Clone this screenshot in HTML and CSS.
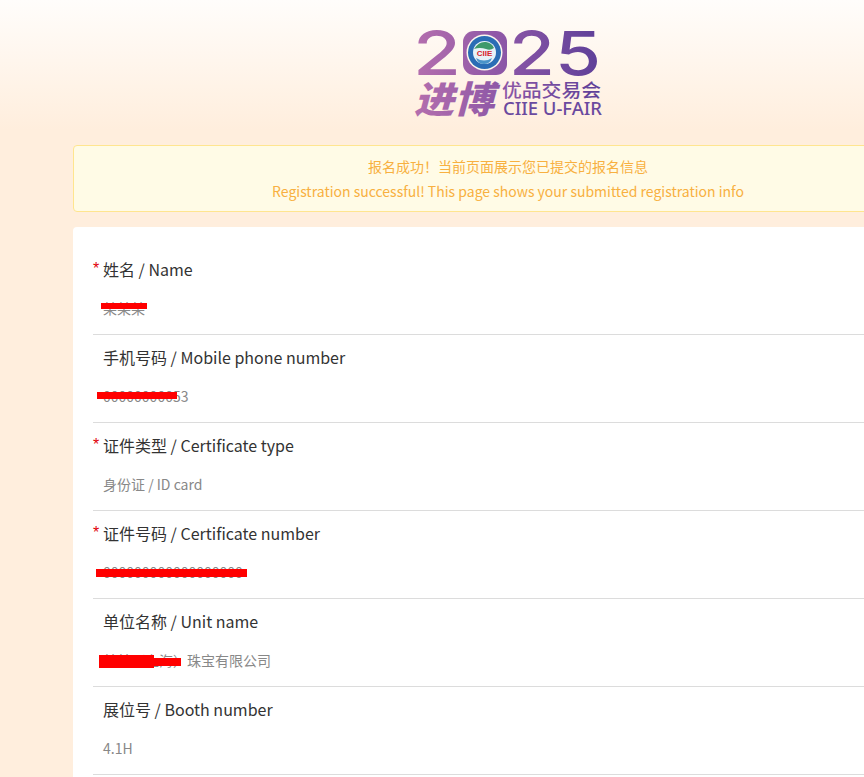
FILE: index.html
```html
<!DOCTYPE html>
<html lang="zh-CN">
<head>
    <meta charset="UTF-8">
    <meta name="viewport" content="width=device-width, initial-scale=1.0">
    <title>2025 进博优品交易会</title>
    <link rel="stylesheet" href="styles.css">
</head>
<body>
    <div class="page">
        <header class="logo-wrap">
            <svg class="logo" width="190" height="92" viewBox="0 0 190 92" role="img" aria-label="2025 进博优品交易会 CIIE U-FAIR">
                <defs>
                    <linearGradient id="logo-grad" gradientUnits="userSpaceOnUse" x1="0" y1="0" x2="190" y2="0">
                        <stop offset="0" stop-color="#b56fae"/>
                        <stop offset="0.5" stop-color="#8a55a6"/>
                        <stop offset="1" stop-color="#5d3f98"/>
                    </linearGradient>
                </defs>
                <text class="logo-digit" x="0" y="47" textLength="48" lengthAdjust="spacingAndGlyphs" fill="url(#logo-grad)">2</text>
                <rect x="50" y="3" width="44" height="44" rx="11" fill="url(#logo-grad)"/>
                <circle cx="71.5" cy="24.5" r="18" fill="#fdf6ee"/>
                <circle cx="71.5" cy="24.5" r="16.5" fill="#2a6db5"/>
                <circle cx="71.5" cy="24.5" r="11.5" fill="#e8f2f8"/>
                <path d="M61 21 q5 -8 12 -7 q6 1 8 6 q-4 3 -8 1 q-6 -2 -12 0z" fill="#3f9a6b"/>
                <path d="M63 30 q8 5 16 0 q-2 6 -8 6 q-6 0 -8 -6z" fill="#4a94c9"/>
                <text class="logo-globe-text" x="71.5" y="28" text-anchor="middle">CIIE</text>
                <text class="logo-digit" x="96" y="47" textLength="92" lengthAdjust="spacingAndGlyphs" fill="url(#logo-grad)">25</text>
                <text class="logo-jinbo" x="1" y="85" textLength="80" lengthAdjust="spacingAndGlyphs" fill="url(#logo-grad)">进博</text>
                <text class="logo-cn" x="89" y="69" textLength="99" lengthAdjust="spacingAndGlyphs" fill="url(#logo-grad)">优品交易会</text>
                <text class="logo-en" x="90" y="87" textLength="99" lengthAdjust="spacingAndGlyphs" fill="#6a4a9f">CIIE U-FAIR</text>
            </svg>
        </header>

        <div class="notice">
            <p>报名成功！当前页面展示您已提交的报名信息</p>
            <p>Registration successful! This page shows your submitted registration info</p>
        </div>

        <div class="card">
            <div class="field">
                <div class="field-label required">姓名 / Name</div>
                <div class="field-value"><span class="mask mask-name"></span>某某某</div>
            </div>
            <div class="field">
                <div class="field-label">手机号码 / Mobile phone number</div>
                <div class="field-value"><span class="mask mask-phone"></span>00000000053</div>
            </div>
            <div class="field">
                <div class="field-label required">证件类型 / Certificate type</div>
                <div class="field-value">身份证 / ID card</div>
            </div>
            <div class="field">
                <div class="field-label required">证件号码 / Certificate number</div>
                <div class="field-value"><span class="mask mask-id"></span>000000000000000000</div>
            </div>
            <div class="field">
                <div class="field-label">单位名称 / Unit name</div>
                <div class="field-value"><span class="mask mask-unit"></span><span class="mask mask-unit-end"></span>某某（上海）珠宝有限公司</div>
            </div>
            <div class="field">
                <div class="field-label">展位号 / Booth number</div>
                <div class="field-value">4.1H</div>
            </div>
        </div>
    </div>
</body>
</html>
```

FILE: styles.css
```css
html, body {
    margin: 0;
    padding: 0;
}
body {
    font-family: "Noto Sans CJK SC", "Noto Sans", sans-serif;
    background: linear-gradient(180deg, #fffdfb 0, #ffeedd 130px, #ffeedd 100%);
    overflow-x: hidden;
    min-height: 100vh;
}
.page {
    width: 870px;
    margin-left: 73px;
}
.logo-wrap {
    display: flex;
    justify-content: center;
    height: 145px;
    padding-top: 28px;
    box-sizing: border-box;
}
.logo {
    display: block;
}
.logo-digit {
    font-family: Inter, sans-serif;
    font-size: 61px;
    font-weight: 500;
}
.logo-globe-text {
    font-family: "Liberation Sans", sans-serif;
    font-size: 8px;
    font-weight: 700;
    fill: #d8262c;
}
.logo-jinbo {
    font-family: "Noto Sans CJK SC", sans-serif;
    font-size: 37px;
    font-weight: 900;
    font-style: italic;
}
.logo-cn {
    font-family: "Noto Sans CJK SC", sans-serif;
    font-size: 18px;
    font-weight: 500;
}
.logo-en {
    font-family: "Noto Sans", sans-serif;
    font-size: 18px;
    font-weight: 500;
}
.notice {
    height: 67px;
    box-sizing: border-box;
    padding: 8px 0;
    background-color: #fffbe6;
    border: 1px solid #ffe58f;
    border-radius: 4px;
    color: #f8b040;
    font-size: 14px;
    line-height: 25px;
    text-align: center;
}
.notice p {
    margin: 0;
}
.card {
    margin-top: 15px;
    padding: 20px 20px;
    background-color: #fff;
    border-radius: 4px;
}
.field {
    height: 88px;
    box-sizing: border-box;
    border-bottom: 1px solid #dcdcdc;
    padding-top: 10px;
}
.field-label {
    position: relative;
    padding-left: 10px;
    font-size: 16px;
    line-height: 24px;
    color: #333;
}
.field-label.required::before {
    content: "*";
    position: absolute;
    left: 0;
    top: 0;
    color: #e1000a;
    font-family: "Liberation Sans", sans-serif;
    font-size: 16px;
}
.field-value {
    position: relative;
    margin-top: 16px;
    padding-left: 10px;
    font-size: 14px;
    line-height: 22px;
    color: #888;
}
/* red marks laid over the personal data */
.mask {
    position: absolute;
    background-color: #ff0000;
}
.mask-name {
    left: 8px;
    top: 6px;
    width: 46px;
    height: 6px;
}
.mask-phone {
    left: 4px;
    top: 7px;
    width: 80px;
    height: 7px;
}
.mask-id {
    left: 3px;
    top: 8px;
    width: 151px;
    height: 8px;
}
.mask-unit {
    left: 6px;
    top: 6px;
    width: 55px;
    height: 13px;
}
.mask-unit-end {
    left: 61px;
    top: 9px;
    width: 27px;
    height: 8px;
}
```
